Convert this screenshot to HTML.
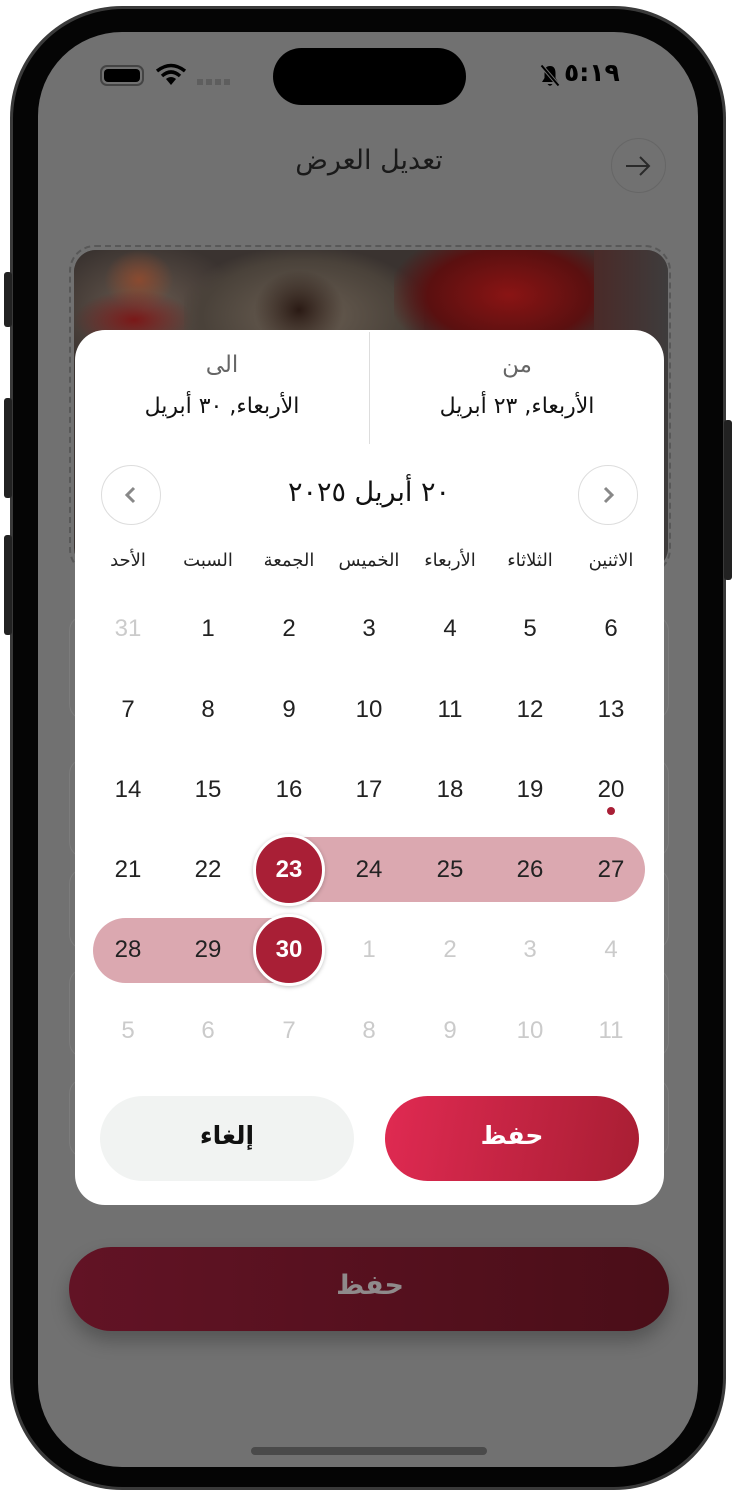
<!DOCTYPE html>
<html><head><meta charset="utf-8"><style>
*{margin:0;padding:0;box-sizing:border-box}
body{width:736px;height:1496px;background:#fff;position:relative;overflow:hidden;font-family:"Liberation Sans","DejaVu Sans",sans-serif}
.a{position:absolute}
.c{position:absolute;text-align:center;white-space:nowrap}
.n{position:absolute;width:60px;text-align:center;font-size:24px;color:#222;line-height:30px}
.g{color:#cbcbcb}
.h{position:absolute;width:80px;text-align:center;font-size:18px;color:#222;direction:rtl;font-family:'DejaVu Sans',sans-serif}
.bx{position:absolute;left:69px;width:600px;border:1.5px solid #7c7c7c;border-radius:16px}
</style></head><body>
<div class="a" style="left:10px;top:6px;width:716px;height:1484px;border-radius:112px;background:#3a3a3a"></div>
<div class="a" style="left:13px;top:9px;width:710px;height:1478px;border-radius:110px;background:#050505"></div>
<div class="a" style="left:4px;top:272px;width:8px;height:55px;background:#222;border-radius:3px"></div>
<div class="a" style="left:4px;top:398px;width:8px;height:100px;background:#222;border-radius:3px"></div>
<div class="a" style="left:4px;top:535px;width:8px;height:100px;background:#222;border-radius:3px"></div>
<div class="a" style="left:724px;top:420px;width:8px;height:160px;background:#222;border-radius:3px"></div>
<div class="a" style="left:38px;top:32px;width:660px;height:1435px;border-radius:84px;background:#717171"></div>
<div class="a" style="left:273px;top:48px;width:193px;height:57px;border-radius:29px;background:#000"></div>
<div class="a" style="left:100px;top:65px;width:44px;height:21px;border:2px solid #444;border-radius:7px"></div>
<div class="a" style="left:104px;top:69px;width:36px;height:13px;background:#000;border-radius:4px"></div>
<svg class="a" style="left:155px;top:63px" width="32" height="24" viewBox="0 0 32 24"><path d="M2 8 Q16 -3 30 8" stroke="#000" stroke-width="3.5" fill="none"/><path d="M7 13 Q16 5 25 13" stroke="#000" stroke-width="3.5" fill="none"/><path d="M16 22 L11 16 Q16 12 21 16 Z" fill="#000"/></svg>
<div class="a" style="left:197px;top:79px;width:34px;height:6px;background:repeating-linear-gradient(90deg,#5e5e5e 0 6px,transparent 6px 9px)"></div>
<svg class="a" style="left:538px;top:63px" width="24" height="26" viewBox="0 0 24 26"><path d="M12 3 C8 3 6.5 6 6.5 10 L6.5 15 L4 19 L20 19 L17.5 15 L17.5 10 C17.5 6 16 3 12 3Z" fill="#000"/><path d="M9.5 21 Q12 24.5 14.5 21Z" fill="#000"/><path d="M3 2 L21 23" stroke="#717171" stroke-width="4"/><path d="M3.5 2.5 L20.5 22.5" stroke="#000" stroke-width="2"/></svg>
<div class="c" style="left:564px;top:58px;width:54px;font-size:25px;font-weight:bold;color:#000;font-family:'DejaVu Sans',sans-serif">٥:١٩</div>
<div class="c" style="left:240px;top:145px;width:258px;font-size:27px;color:#1a1a1a;direction:rtl;font-family:'DejaVu Sans',sans-serif">تعديل العرض</div>
<div class="a" style="left:611px;top:138px;width:55px;height:55px;border-radius:50%;border:1.5px solid #666"></div>
<svg class="a" style="left:623px;top:151px" width="30" height="30" viewBox="0 0 30 30"><path d="M3 15 H26 M17 6 L26 15 L17 24" stroke="#2a2a2a" stroke-width="2" fill="none"/></svg>
<div class="a" style="left:69px;top:245px;width:602px;height:330px;border:2px dashed #585858;border-radius:26px"></div>
<div class="a" style="left:74px;top:250px;width:594px;height:320px;border-radius:22px;overflow:hidden;background:#3a3330">
 <div class="a" style="left:-30px;top:-10px;width:200px;height:140px;background:radial-gradient(ellipse at 50% 50%,#6a5b50,#3a3330 70%)"></div>
 <div class="a" style="left:30px;top:0px;width:70px;height:60px;background:radial-gradient(#8a4a30,transparent 70%)"></div>
 <div class="a" style="left:0;top:40px;width:120px;height:60px;background:radial-gradient(#7a1818,transparent 70%)"></div>
 <div class="a" style="left:110px;top:0;width:240px;height:110px;background:radial-gradient(ellipse at 50% 60%,#6b5f53,#4a423a 60%,transparent 75%)"></div>
 <div class="a" style="left:180px;top:20px;width:90px;height:80px;background:radial-gradient(#2a1a14,transparent 70%)"></div>
 <div class="a" style="left:320px;top:-20px;width:230px;height:130px;background:radial-gradient(ellipse,#8a1414,#5a1010 50%,transparent 75%)"></div>
 <div class="a" style="left:520px;top:0;width:74px;height:320px;background:linear-gradient(90deg,#4a2a28,#3e3c3c)"></div>
</div>
<div class="bx" style="top:615px;height:105px"></div>
<div class="bx" style="top:758px;height:100px"></div>
<div class="bx" style="top:868px;height:82px"></div>
<div class="bx" style="top:968px;height:90px"></div>
<div class="bx" style="top:1078px;height:80px"></div>
<div class="a" style="left:69px;top:1247px;width:600px;height:84px;border-radius:42px;background:linear-gradient(90deg,#621325,#4a0e18);box-shadow:0 10px 18px rgba(0,0,0,.25)"></div>
<div class="c" style="left:300px;top:1270px;width:140px;font-size:27px;font-weight:bold;color:#8f8a8b;direction:rtl;font-family:'DejaVu Sans',sans-serif">حفظ</div>
<div class="a" style="left:251px;top:1447px;width:236px;height:8px;border-radius:4px;background:#4a4a4a"></div>
<div class="a" style="left:75px;top:330px;width:589px;height:875px;border-radius:30px;background:#fff"></div>
<div class="a" style="left:369px;top:332px;width:1px;height:112px;background:#ddd"></div>
<div class="c" style="left:417px;top:352px;width:200px;font-size:23px;color:#666;direction:rtl;font-family:'DejaVu Sans',sans-serif">من</div>
<div class="c" style="left:397px;top:394px;width:240px;font-size:22px;color:#111;direction:rtl;font-family:'DejaVu Sans',sans-serif">الأربعاء, ٢٣ أبريل</div>
<div class="c" style="left:122px;top:352px;width:200px;font-size:23px;color:#666;direction:rtl;font-family:'DejaVu Sans',sans-serif">الى</div>
<div class="c" style="left:102px;top:394px;width:240px;font-size:22px;color:#111;direction:rtl;font-family:'DejaVu Sans',sans-serif">الأربعاء, ٣٠ أبريل</div>
<div class="a" style="left:101px;top:465px;width:60px;height:60px;border-radius:50%;border:1.5px solid #ddd"></div>
<svg class="a" style="left:121px;top:485px" width="20" height="20" viewBox="0 0 20 20"><path d="M13 3 L6 10 L13 17" stroke="#888" stroke-width="3" fill="none"/></svg>
<div class="a" style="left:578px;top:465px;width:60px;height:60px;border-radius:50%;border:1.5px solid #ddd"></div>
<svg class="a" style="left:598px;top:485px" width="20" height="20" viewBox="0 0 20 20"><path d="M7 3 L14 10 L7 17" stroke="#888" stroke-width="3" fill="none"/></svg>
<div class="c" style="left:239px;top:477px;width:260px;font-size:27px;color:#111;direction:rtl;font-family:'DejaVu Sans',sans-serif">٢٠ أبريل ٢٠٢٥</div>
<div class="h" style="left:88px;top:550px">الأحد</div>
<div class="h" style="left:168px;top:550px">السبت</div>
<div class="h" style="left:249px;top:550px">الجمعة</div>
<div class="h" style="left:324px;top:550px;width:90px">الخميس</div>
<div class="h" style="left:410px;top:550px">الأربعاء</div>
<div class="h" style="left:490px;top:550px">الثلاثاء</div>
<div class="h" style="left:571px;top:550px">الاثنين</div>
<div class="a" style="left:280px;top:837px;width:365px;height:65px;border-radius:0 33px 33px 0;background:#dba8b0"></div>
<div class="a" style="left:93px;top:918px;width:200px;height:65px;border-radius:33px 0 0 33px;background:#dba8b0"></div>
<div class="a" style="left:253px;top:834px;width:72px;height:72px;border-radius:50%;background:#a91f36;border:3px solid #fff;box-shadow:0 1px 4px rgba(0,0,0,.25)"></div>
<div class="a" style="left:253px;top:914px;width:72px;height:72px;border-radius:50%;background:#a91f36;border:3px solid #fff;box-shadow:0 1px 4px rgba(0,0,0,.25)"></div>
<div class="a" style="left:607px;top:807px;width:8px;height:8px;border-radius:50%;background:#a91f36"></div>
<div class="n g" style="left:98px;top:614px">31</div><div class="n" style="left:178px;top:614px">1</div><div class="n" style="left:259px;top:614px">2</div><div class="n" style="left:339px;top:614px">3</div><div class="n" style="left:420px;top:614px">4</div><div class="n" style="left:500px;top:614px">5</div><div class="n" style="left:581px;top:614px">6</div>
<div class="n" style="left:98px;top:695px">7</div><div class="n" style="left:178px;top:695px">8</div><div class="n" style="left:259px;top:695px">9</div><div class="n" style="left:339px;top:695px">10</div><div class="n" style="left:420px;top:695px">11</div><div class="n" style="left:500px;top:695px">12</div><div class="n" style="left:581px;top:695px">13</div>
<div class="n" style="left:98px;top:775px">14</div><div class="n" style="left:178px;top:775px">15</div><div class="n" style="left:259px;top:775px">16</div><div class="n" style="left:339px;top:775px">17</div><div class="n" style="left:420px;top:775px">18</div><div class="n" style="left:500px;top:775px">19</div><div class="n" style="left:581px;top:775px">20</div>
<div class="n" style="left:98px;top:855px">21</div><div class="n" style="left:178px;top:855px">22</div><div class="n" style="left:259px;top:855px;color:#fff;font-weight:bold">23</div><div class="n" style="left:339px;top:855px">24</div><div class="n" style="left:420px;top:855px">25</div><div class="n" style="left:500px;top:855px">26</div><div class="n" style="left:581px;top:855px">27</div>
<div class="n" style="left:98px;top:935px">28</div><div class="n" style="left:178px;top:935px">29</div><div class="n" style="left:259px;top:935px;color:#fff;font-weight:bold">30</div><div class="n g" style="left:339px;top:935px">1</div><div class="n g" style="left:420px;top:935px">2</div><div class="n g" style="left:500px;top:935px">3</div><div class="n g" style="left:581px;top:935px">4</div>
<div class="n g" style="left:98px;top:1016px">5</div><div class="n g" style="left:178px;top:1016px">6</div><div class="n g" style="left:259px;top:1016px">7</div><div class="n g" style="left:339px;top:1016px">8</div><div class="n g" style="left:420px;top:1016px">9</div><div class="n g" style="left:500px;top:1016px">10</div><div class="n g" style="left:581px;top:1016px">11</div>
<div class="a" style="left:100px;top:1096px;width:254px;height:85px;border-radius:43px;background:#f1f3f2"></div>
<div class="c" style="left:157px;top:1121px;width:140px;font-size:25px;font-weight:bold;color:#111;direction:rtl;font-family:'DejaVu Sans',sans-serif">إلغاء</div>
<div class="a" style="left:385px;top:1096px;width:254px;height:85px;border-radius:43px;background:linear-gradient(100deg,#e02a52,#a81e33)"></div>
<div class="c" style="left:442px;top:1121px;width:140px;font-size:25px;font-weight:bold;color:#fff;direction:rtl;font-family:'DejaVu Sans',sans-serif">حفظ</div>
</body></html>
